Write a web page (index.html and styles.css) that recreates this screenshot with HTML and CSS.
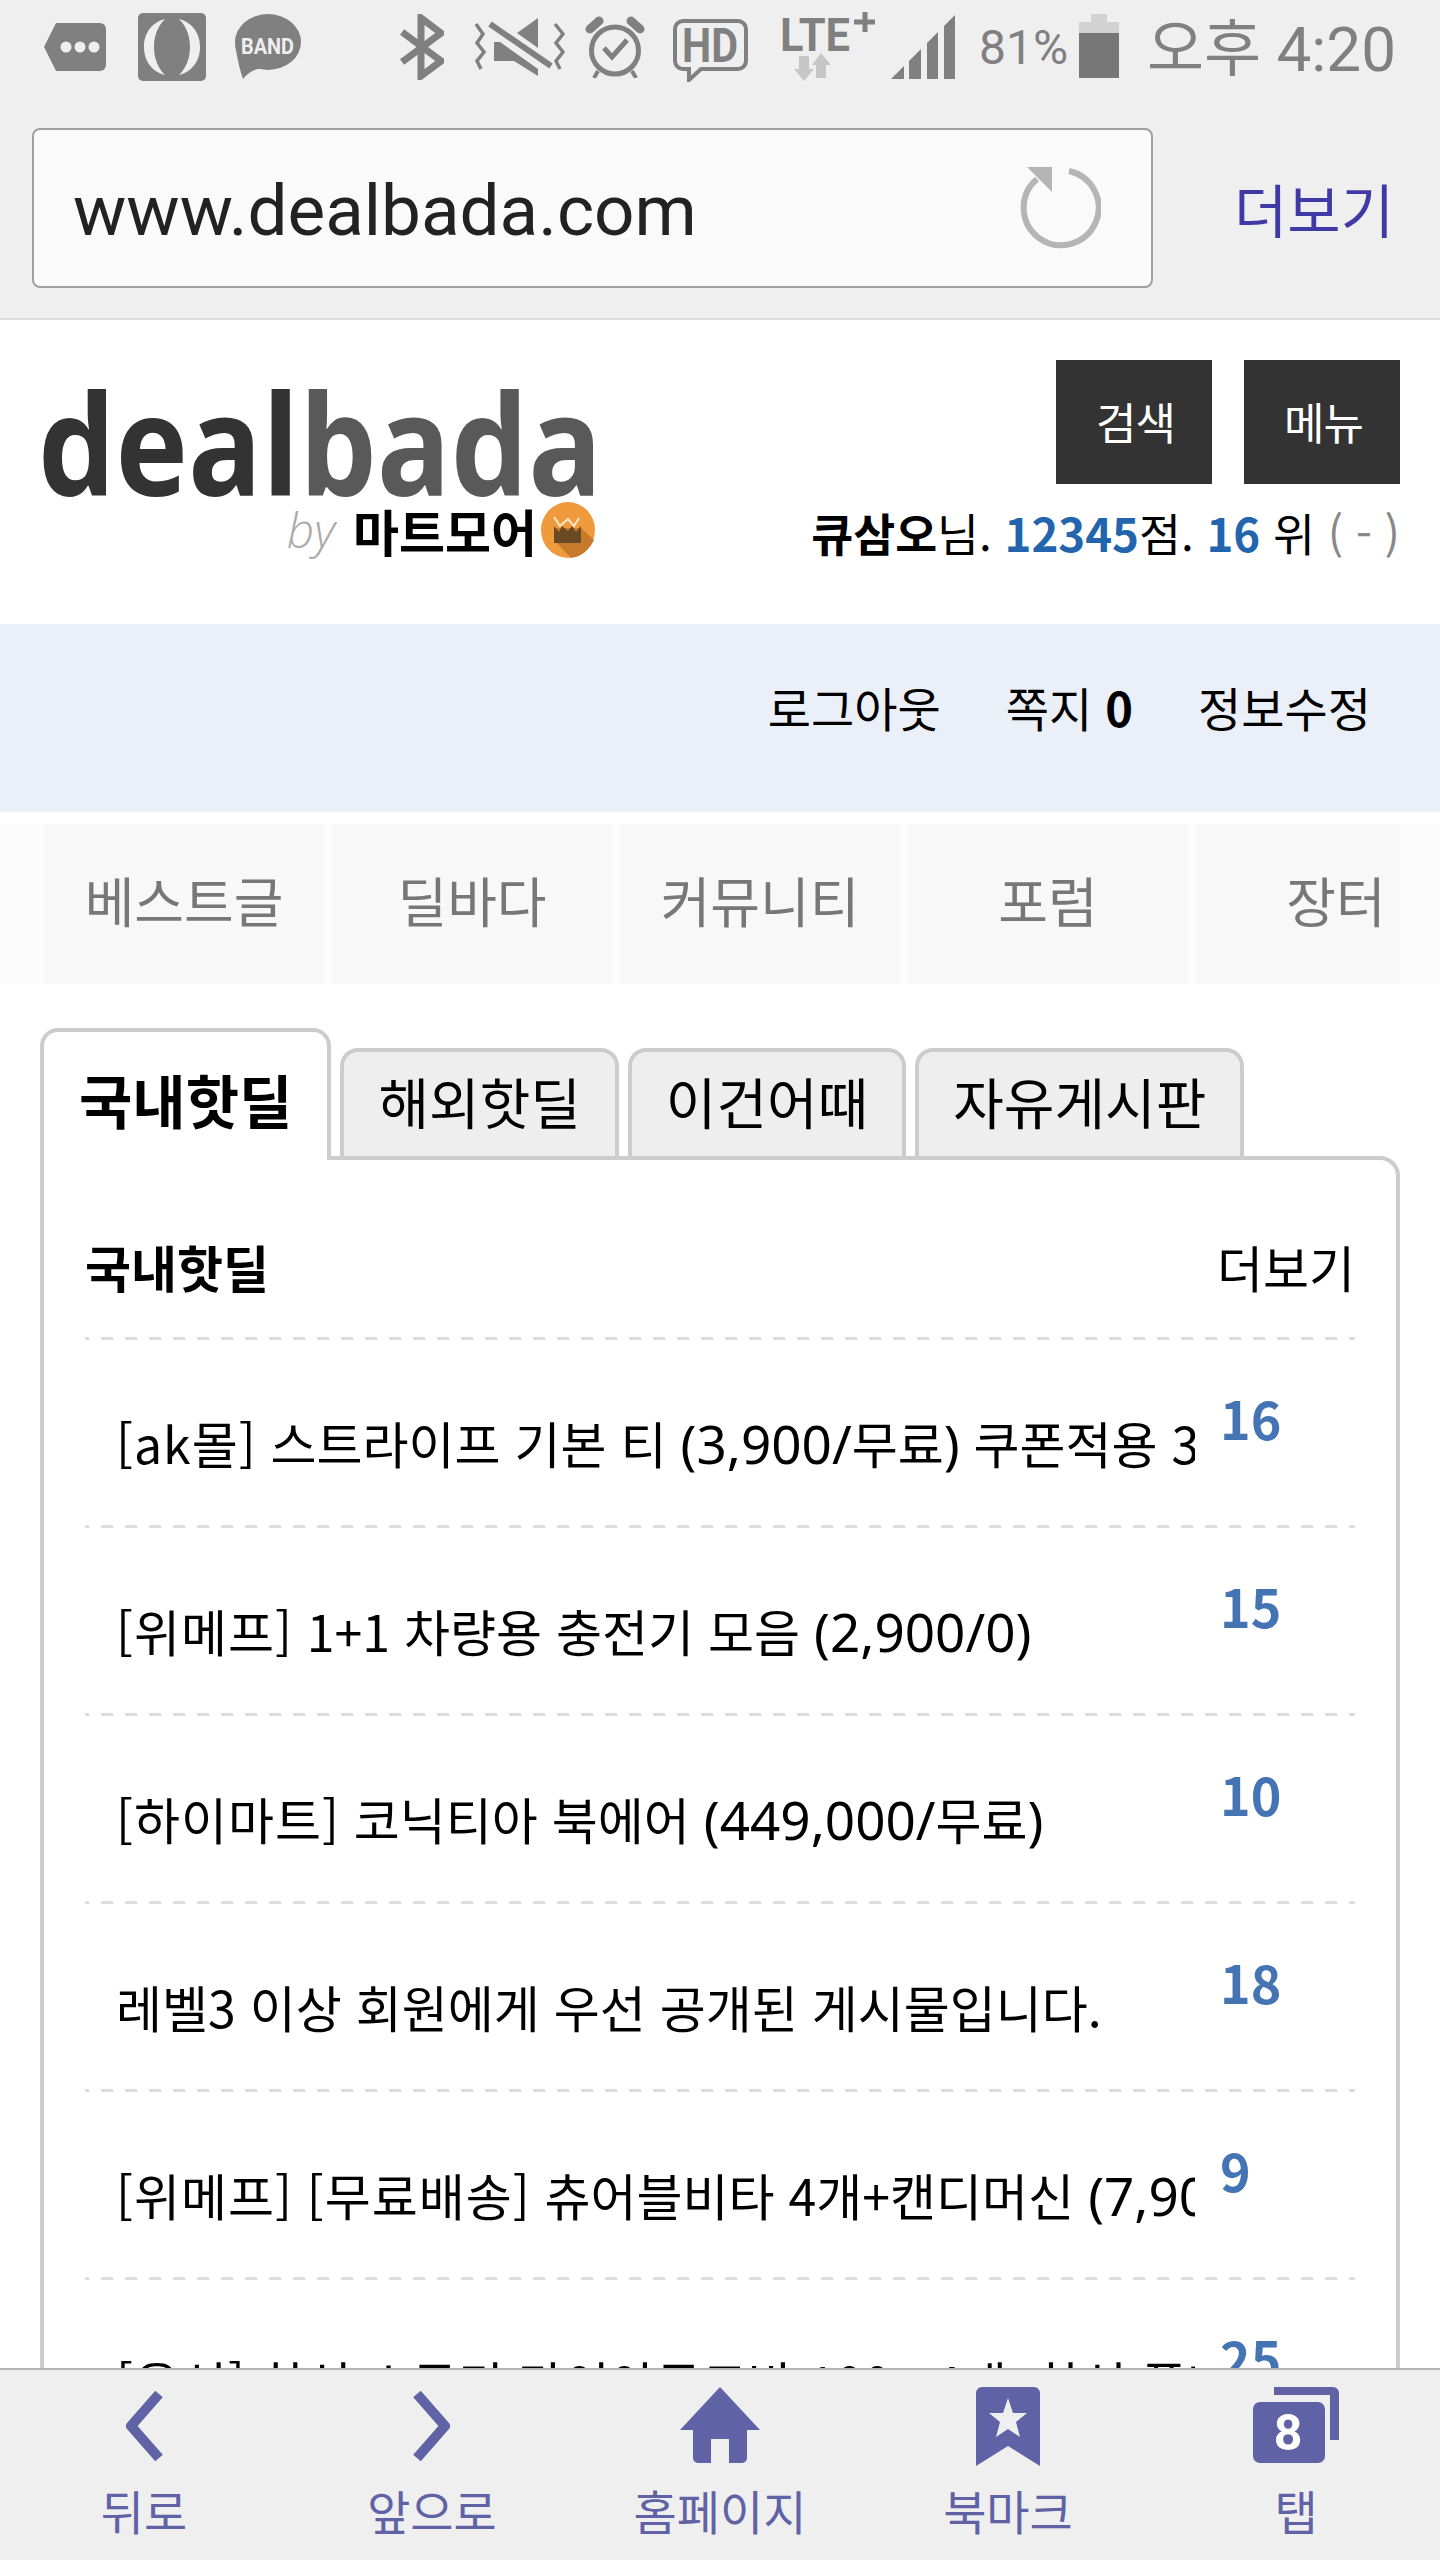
FILE: index.html
```html
<!DOCTYPE html>
<html lang="ko">
<head>
    <meta charset="UTF-8">
    <meta name="viewport" content="width=device-width, initial-scale=1.0">
    <title>dealbada</title>
    <link rel="stylesheet" href="styles.css">
</head>
<body>
    <div class="chrome">
        <div class="status">
            <svg class="ic-msg" width="62" height="48" viewBox="0 0 62 48"><path d="M12 0H56a6 6 0 0 1 6 6V42a6 6 0 0 1-6 6H12L0 24Z" fill="#808080"/><g fill="#efefef"><circle cx="22" cy="24" r="5.5"/><circle cx="36" cy="24" r="5.5"/><circle cx="50" cy="24" r="5.5"/></g></svg>
            <svg class="ic-opera" width="68" height="68" viewBox="0 0 68 68"><rect width="68" height="68" rx="5" fill="#808080"/><path d="M27 6C12 10 6 22 6 34S12 58 27 62C19 54 16 44 16 34S19 14 27 6Z" fill="#efefef"/><path d="M41 6C56 10 62 22 62 34S56 58 41 62C49 54 52 44 52 34S49 14 41 6Z" fill="#efefef"/></svg>
            <svg class="ic-band" width="66" height="65" viewBox="0 0 66 65"><ellipse cx="33" cy="28" rx="33" ry="28" fill="#808080"/><path d="M0 30C2 44 5 56 8 65C14 58 20 54 32 54Z" fill="#808080"/><text x="6" y="40" class="band-text" textLength="53" lengthAdjust="spacingAndGlyphs">BAND</text></svg>
            <svg class="ic-bt" width="44" height="66" viewBox="0 0 44 66"><path d="M2 18L41 47L21 62V4L41 19L2 48" fill="none" stroke="#808080" stroke-width="7"/></svg>
            <svg class="ic-mute" width="92" height="58" viewBox="0 0 92 58"><g fill="#808080"><path d="M44 15L65 0V30Z"/><path d="M21 24V43H41L65 58V51L27 24Z"/></g><g fill="none" stroke="#808080"><path d="M17 6L78 48" stroke-width="6"/><path d="M3 6L10 16L4 25L11 34L4 43L8 51" stroke-width="3.5"/><path d="M82 6L90 16L83 25L90 34L83 43L87 51" stroke-width="3.5"/></g></svg>
            <svg class="ic-alarm" width="60" height="62" viewBox="0 0 60 62"><g fill="none" stroke="#808080"><circle cx="30" cy="34.5" r="23.5" stroke-width="5"/><path d="M19 32L27 41L42 24" stroke-width="5"/><path d="M5 13L14 5M46 5L55 13" stroke-width="9" stroke-linecap="round"/><path d="M13 55L9 62M47 55L51 62" stroke-width="4"/></g></svg>
            <svg class="ic-hd" width="75" height="63" viewBox="0 0 75 63"><path d="M10 2H65a8 8 0 0 1 8 8V42a8 8 0 0 1-8 8H28L16 61V50H10a8 8 0 0 1-8-8V10A8 8 0 0 1 10 2Z" fill="none" stroke="#808080" stroke-width="4"/><text x="9" y="43" class="hd-text" textLength="56" lengthAdjust="spacingAndGlyphs">HD</text></svg>
            <svg class="ic-lte" width="95" height="70" viewBox="0 0 95 70"><text x="0" y="40" class="lte-text" textLength="70" lengthAdjust="spacingAndGlyphs">LTE</text><path d="M85 1V21M74 11H95" stroke="#808080" stroke-width="5" fill="none"/><path d="M19 45V58H14L24 70L34 58H29V45Z" fill="#c6c6c6"/><path d="M36 67V54H32L41 42L51 54H46V67Z" fill="#c6c6c6"/></svg>
            <svg class="ic-signal" width="64" height="64" viewBox="0 0 64 64"><g fill="#808080"><path d="M0 64L13 51V64Z"/><path d="M18 64V46L30 34V64Z"/><path d="M36 64V28L47 17V64Z"/><path d="M53 64V11L64 0V64Z"/></g></svg>
            <span class="status-batt">81%</span>
            <svg class="ic-battery" width="40" height="64" viewBox="0 0 40 64"><path d="M12 0H28V8H40V20H0V8H12Z" fill="#d2d2d2"/><rect y="19" width="40" height="45" fill="#777"/></svg>
            <span class="status-time">오후 4:20</span>
        </div>
        <div class="urlrow">
            <div class="urlbox">
                <span class="url">www.dealbada.com</span>
                <svg width="82" height="82" viewBox="0 0 82 82"><path d="M50 4A37.5 37.5 0 1 1 18 12" fill="none" stroke="#b5b5b5" stroke-width="6"/><path d="M8 0H33V25Z" fill="#b5b5b5"/></svg>
            </div>
            <span class="url-more">더보기</span>
        </div>
    </div>

    <header class="site-head">
        <div class="logo">
            <div class="logo-main"><span class="logo-deal">deal</span><span class="logo-bada">bada</span></div>
            <div class="logo-sub">
                <span class="logo-by">by</span>
                <span class="logo-mart">마트모어</span>
                <svg width="54" height="56" viewBox="0 0 54 56"><ellipse cx="27" cy="28" rx="27" ry="28" fill="#f09a3e"/><path d="M13 26H40L53 38C48 48 40 55 30 56L13 38Z" fill="#c87a2c"/><path d="M13 24V41H40V24L35 30L31 24L27 29L21 24L18 30Z" fill="#6a4a22"/><path d="M13 15L19 24L27 17L33 24L38 16" fill="none" stroke="#fbe6c8" stroke-width="2"/></svg>
            </div>
        </div>
        <div class="head-right">
            <div class="head-btns">
                <a class="head-btn">검색</a>
                <a class="head-btn">메뉴</a>
            </div>
            <div class="userline"><b>큐삼오</b>님. <b class="blue">12345</b>점. <b class="blue">16</b> 위 <span class="muted">( - )</span></div>
        </div>
    </header>

    <div class="member-bar">
        <a>로그아웃</a>
        <a>쪽지 <b>0</b></a>
        <a>정보수정</a>
    </div>

    <nav class="main-nav">
        <div class="nav-inner">
            <a>베스트글</a>
            <a>딜바다</a>
            <a>커뮤니티</a>
            <a>포럼</a>
            <a>장터</a>
        </div>
    </nav>

    <main class="content">
        <ul class="tabs">
            <li class="tab active">국내핫딜</li>
            <li class="tab">해외핫딜</li>
            <li class="tab">이건어때</li>
            <li class="tab">자유게시판</li>
        </ul>
        <section class="panel">
            <div class="panel-head">
                <h2>국내핫딜</h2>
                <a>더보기</a>
            </div>
            <ul class="deals">
                <li><span class="title"><span class="tag">[ak몰]</span> 스트라이프 기본 티 <span class="num">(3,900/</span>무료<span class="num">)</span> 쿠폰적용 3,500원 구매가능합니다</span><span class="count">16</span></li>
                <li><span class="title"><span class="tag">[위메프]</span> 1+1 차량용 충전기 모음 <span class="num">(2,900/0)</span></span><span class="count">15</span></li>
                <li><span class="title"><span class="tag">[하이마트]</span> 코닉티아 북에어 <span class="num">(449,000/</span>무료<span class="num">)</span></span><span class="count">10</span></li>
                <li><span class="title">레벨3 이상 회원에게 우선 공개된 게시물입니다.</span><span class="count">18</span></li>
                <li><span class="title"><span class="tag">[위메프]</span> <span class="tag">[무료배송]</span> 츄어블비타 4개+캔디머신 <span class="num">(7,900/</span>무료<span class="num">)</span></span><span class="count">9</span></li>
                <li><span class="title"><span class="tag">[옥션]</span> 한신 스무디 다이아몬드바 100g 4개, 한신 플라스틱 용기</span><span class="count">25</span></li>
            </ul>
        </section>
    </main>

    <footer class="toolbar">
        <a class="tool">
            <svg width="80" height="80" viewBox="0 0 80 80"><path d="M55 7L27 39L55 71" fill="none" stroke="#5f63a5" stroke-width="10" stroke-linejoin="round"/></svg>
            <span>뒤로</span>
        </a>
        <a class="tool">
            <svg width="80" height="80" viewBox="0 0 80 80"><path d="M25 7L53 39L25 71" fill="none" stroke="#5f63a5" stroke-width="10" stroke-linejoin="round"/></svg>
            <span>앞으로</span>
        </a>
        <a class="tool">
            <svg width="82" height="80" viewBox="0 0 82 80"><path d="M41 0L81 43H68V71a5 5 0 0 1-5 5H50V52H32V76H19a5 5 0 0 1-5-5V43H1Z" fill="#5f63a5"/></svg>
            <span>홈페이지</span>
        </a>
        <a class="tool">
            <svg width="64" height="80" viewBox="0 0 64 80"><path d="M6 0H58a6 6 0 0 1 6 6V79L32 59L0 79V6A6 6 0 0 1 6 0Z" fill="#5f63a5"/><path d="M32 11L37 26L51 26L40 35L44 50L32 42L20 50L24 35L13 26L27 26Z" fill="#efefef"/></svg>
            <span>북마크</span>
        </a>
        <a class="tool">
            <svg width="86" height="80" viewBox="0 0 86 80"><path d="M21 0H80a6 6 0 0 1 6 6V53H77V8H21Z" fill="#5f63a5"/><rect y="15" width="72" height="61" rx="7" fill="#5f63a5"/><text x="35" y="63" class="tab-count" text-anchor="middle">8</text></svg>
            <span>탭</span>
        </a>
    </footer>
</body>
</html>
```

FILE: styles.css
```css
:root {
    --chrome-bg: #efefef;
    --status-color: #808080;
    --border-color: #cccccc;
    --tool-color: #5f63a5;
    --count-color: #4474b3;
}

* {
    box-sizing: border-box;
}

body {
    margin: 0;
    width: 1440px;
    height: 2560px;
    overflow: hidden;
    display: flex;
    flex-direction: column;
    background-color: #ffffff;
    color: #000000;
    font-family: 'Noto Sans CJK KR', 'Noto Sans', sans-serif;
}

a {
    color: inherit;
    text-decoration: none;
}

ul {
    list-style: none;
    margin: 0;
    padding: 0;
}

/* Browser chrome */
.chrome {
    flex: none;
    height: 320px;
    background-color: var(--chrome-bg);
    border-bottom: 2px solid #dddddd;
}

.status {
    height: 128px;
    display: flex;
    align-items: flex-start;
    padding-left: 44px;
    color: var(--status-color);
}

.status svg {
    flex: none;
}

.ic-msg { margin-top: 23px; }
.ic-opera { margin: 13px 0 0 32px; }
.ic-band { margin: 14px 0 0 29px; }
.ic-bt { margin: 14px 0 0 99px; }
.ic-mute { margin: 18px 0 0 29px; }
.ic-alarm { margin: 16px 0 0 20px; }
.ic-hd { margin: 19px 0 0 28px; }
.ic-lte { margin: 11px 0 0 32px; }
.ic-signal { margin: 15px 0 0 16px; }
.ic-battery { margin: 14px 0 0 13px; }

.band-text {
    font: bold 22px Roboto, sans-serif;
    fill: #efefef;
}

.hd-text {
    font: bold 48px Roboto, sans-serif;
    fill: #808080;
}

.lte-text {
    font: bold 46px Roboto, sans-serif;
    fill: #808080;
}

.status-batt {
    margin: 14px 0 0 24px;
    font: 48px/68px Roboto, sans-serif;
    width: 87px;
}

.status-time {
    margin: 8px 0 0 28px;
    font: 62px/84px Roboto, 'Noto Sans CJK KR', sans-serif;
    white-space: nowrap;
}

.urlrow {
    display: flex;
    align-items: center;
    padding-left: 32px;
}

.urlbox {
    width: 1121px;
    height: 160px;
    display: flex;
    align-items: center;
    justify-content: space-between;
    padding: 0 50px 0 39px;
    background-color: #fafafa;
    border: 2px solid #a0a0a0;
    border-radius: 8px;
}

.url {
    padding-top: 4px;
    font: 71px Roboto, sans-serif;
    color: #222222;
}

.url-more {
    margin-left: 81px;
    font-size: 58px;
    line-height: 80px;
    color: #3f3aa5;
}

/* Site header */
.site-head {
    flex: none;
    height: 304px;
    display: flex;
    justify-content: space-between;
}

.logo {
    width: 554px;
    margin: 52px 0 0 38px;
}

.logo-main {
    margin-bottom: -12px;
    font: bold 140px/140px 'Open Sans', sans-serif;
    white-space: nowrap;
    transform: scaleX(0.875);
    transform-origin: left;
}

.logo-deal { color: #333333; }
.logo-bada { color: #595959; }

.logo-sub {
    display: flex;
    align-items: center;
    justify-content: flex-end;
    margin-right: -3px;
}

.logo-by {
    margin-right: 18px;
    font: italic 300 48px/60px 'Open Sans', sans-serif;
    color: #aaaaaa;
}

.logo-mart {
    margin-right: 4px;
    font-weight: bold;
    font-size: 50px;
    line-height: 60px;
    white-space: nowrap;
}

.head-right {
    display: flex;
    flex-direction: column;
    align-items: flex-end;
    padding: 40px 40px 0 0;
}

.head-btns {
    display: flex;
    gap: 32px;
}

.head-btn {
    width: 156px;
    height: 124px;
    display: flex;
    align-items: center;
    justify-content: center;
    padding: 0 0 2px 3px;
    background-color: #333333;
    color: #ffffff;
    font-size: 44px;
    letter-spacing: -1px;
}

.userline {
    margin-top: 15px;
    font-size: 45.6px;
    line-height: 66px;
    white-space: nowrap;
}

.blue { color: #2265ae; }
.muted { color: #888888; }

.member-bar {
    flex: none;
    height: 188px;
    display: flex;
    justify-content: flex-end;
    gap: 65px;
    padding: 50px 69px 0 0;
    background-color: #ebeff8;
    font-size: 47px;
    line-height: 66px;
}

.main-nav {
    flex: none;
    height: 160px;
    margin-top: 12px;
    background-color: #fcfcfc;
}

.nav-inner {
    width: 1356px;
    height: 100%;
    margin-left: 44px;
    display: flex;
    gap: 8px;
    overflow: hidden;
}

.nav-inner a {
    flex: 0 0 280px;
    display: flex;
    align-items: center;
    justify-content: center;
    padding-bottom: 9px;
    background-color: #f8f8f8;
    color: #777777;
    font-size: 54px;
}

/* Tabs and list */
.content {
    flex: 1;
    min-height: 0;
    overflow: hidden;
    padding: 44px 40px 0;
}

.tabs {
    height: 128px;
    display: flex;
    align-items: flex-end;
    gap: 9px;
}

.tab {
    height: 108px;
    padding: 13px 34px 0;
    background-color: #eeeeee;
    border: 4px solid var(--border-color);
    border-bottom: 0;
    border-radius: 18px 18px 0 0;
    font-size: 55px;
    line-height: 70px;
    white-space: nowrap;
}

.tab.active {
    position: relative;
    height: 132px;
    margin-bottom: -4px;
    padding: 32px 35px 0;
    background-color: #ffffff;
    font-weight: bold;
    font-size: 58px;
}

.panel {
    height: 1400px;
    padding: 0 41px;
    border: 4px solid var(--border-color);
    border-radius: 0 20px 0 0;
}

.panel-head {
    height: 180px;
    padding-top: 31px;
    display: flex;
    align-items: center;
    justify-content: space-between;
    background: linear-gradient(90deg, #dddddd 50%, transparent 50%) -8px bottom / 24px 3px repeat-x;
    font-size: 50px;
}

.panel-head h2 {
    margin: 0;
    font-size: 50px;
}

.deals li {
    height: 188px;
    display: flex;
    align-items: flex-start;
    background: linear-gradient(90deg, #dddddd 50%, transparent 50%) -8px bottom / 24px 3px repeat-x;
}

.title {
    width: 1079px;
    margin: 66px 0 0 31px;
    overflow: hidden;
    white-space: nowrap;
    font-size: 50px;
    line-height: 72px;
}

.tag {
    letter-spacing: 1px;
}

.num {
    font-family: 'Noto Sans', sans-serif;
    font-size: 53px;
}

.count {
    margin: 48px 0 0 25px;
    color: var(--count-color);
    font-weight: bold;
    font-size: 52px;
    line-height: 60px;
}

/* Bottom toolbar */
.toolbar {
    flex: none;
    height: 192px;
    display: grid;
    grid-template-columns: repeat(5, 288px);
    background-color: var(--chrome-bg);
    border-top: 2px solid #b5b5b5;
    color: var(--tool-color);
}

.tool {
    display: flex;
    flex-direction: column;
    align-items: center;
    padding-top: 17px;
    font-size: 47px;
    line-height: 60px;
}

.tool svg {
    margin-bottom: 13px;
}

.tab-count {
    font: bold 50px Roboto, sans-serif;
    fill: #ffffff;
}
```
